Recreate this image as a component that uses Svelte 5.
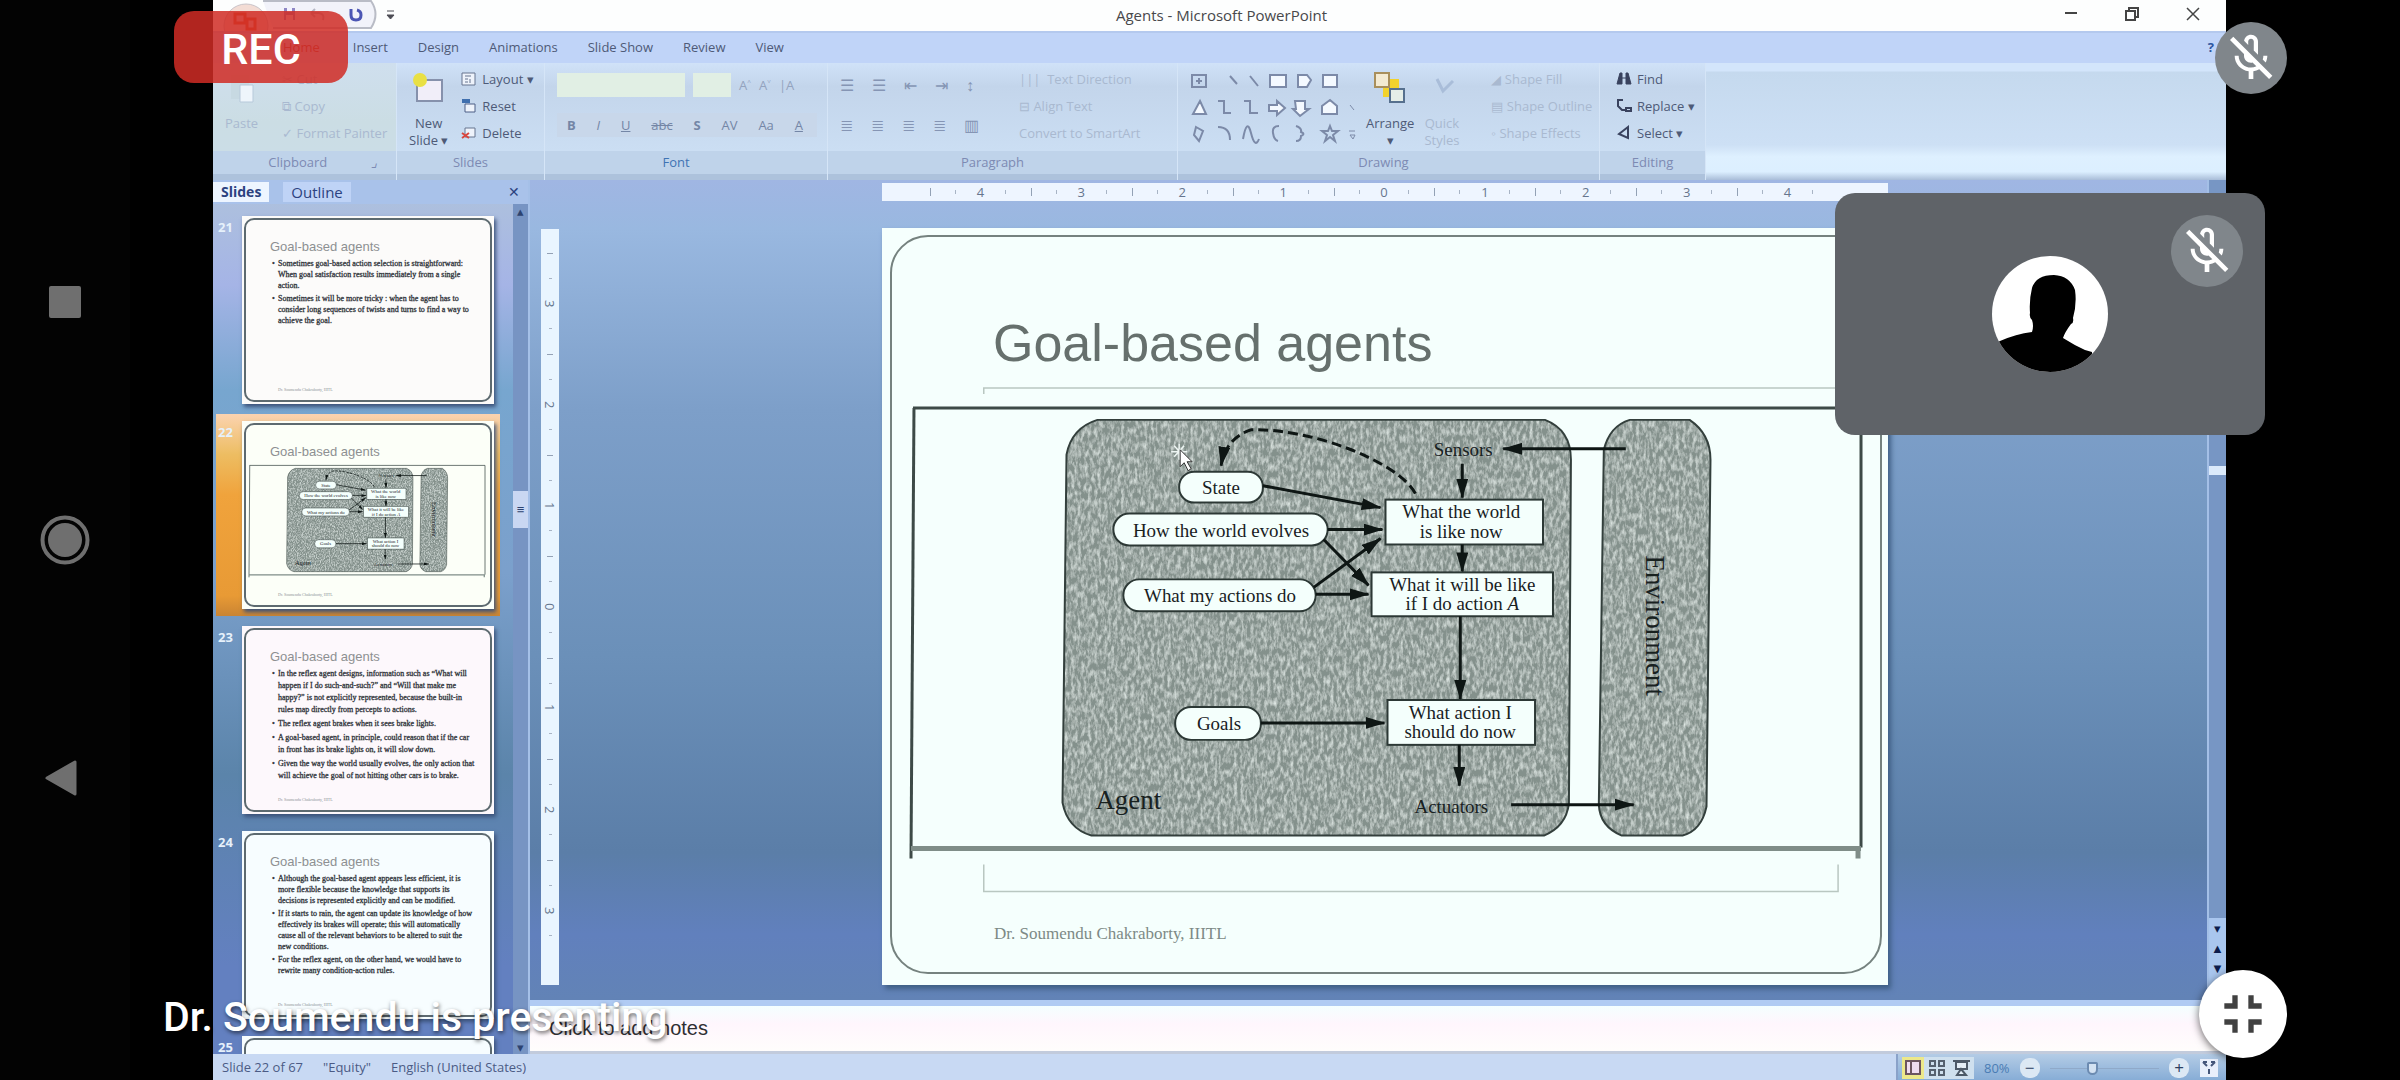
<script>
  const tabs = ['Insert', 'Design', 'Animations', 'Slide Show', 'Review', 'View'];
  const hTicks = ['4', '3', '2', '1', '0', '1', '2', '3', '4'];
  const vTicks = ['3', '2', '1', '0', '1', '2', '3'];
  const slides = [
    {
      n: 21,
      tone: 'warm',
      points: [
        ['Sometimes goal-based action selection is straightforward:', 'When goal satisfaction results immediately from a single', 'action.'],
        ['Sometimes it will be more tricky : when the agent has to', 'consider long sequences of twists and turns to find a way to', 'achieve the goal.']
      ]
    },
    { n: 22, tone: 'ivory', diagram: true, points: [] },
    {
      n: 23,
      tone: 'rose',
      points: [
        ['In the reflex agent designs, information such as “What will', 'happen if I do such-and-such?” and “Will that make me', 'happy?” is not explicitly represented, because the built-in', 'rules map directly from percepts to actions.'],
        ['The reflex agent brakes when it sees brake lights.'],
        ['A goal-based agent, in principle, could reason that if the car', 'in front has its brake lights on, it will slow down.'],
        ['Given the way the world usually evolves, the only action that', 'will achieve the goal of not hitting other cars is to brake.']
      ]
    },
    {
      n: 24,
      tone: 'cool',
      points: [
        ['Although the goal-based agent appears less efficient, it is', 'more flexible because the knowledge that supports its', 'decisions is represented explicitly and can be modified.'],
        ['If it starts to rain, the agent can update its knowledge of how', 'effectively its brakes will operate; this will automatically', 'cause all of the relevant behaviors to be altered to suit the', 'new conditions.'],
        ['For the reflex agent, on the other hand, we would have to', 'rewrite many condition-action rules.']
      ]
    },
    { n: 25, tone: 'cool', points: [] }
  ];
</script>

{#snippet micOff()}
  <svg class="mic" viewBox="0 0 24 24" aria-hidden="true">
    <path fill="#fff" d="M10.8 4.9c0-.66.54-1.2 1.2-1.2s1.2.54 1.2 1.2l-.01 3.91L15 10.6V5c0-1.66-1.34-3-3-3-1.54 0-2.79 1.16-2.96 2.65l1.76 1.76V4.9zM19 11h-1.7c0 .58-.1 1.13-.27 1.64l1.27 1.27c.44-.88.7-1.87.7-2.91zM4.41 2.86L3 4.27l6 6V11c0 1.66 1.34 3 3 3 .23 0 .44-.03.65-.08l1.66 1.66c-.71.33-1.5.52-2.31.52-2.76 0-5.3-2.1-5.3-5.1H5c0 3.41 2.72 6.23 6 6.72V21h2v-3.28c.91-.13 1.77-.45 2.55-.9l4.2 4.2 1.41-1.41L4.41 2.86z" />
  </svg>
{/snippet}

<div class="phone">
  <nav class="keys" aria-label="System">
    <button aria-label="Recent apps"><svg width="50" height="50" viewBox="0 0 50 50"><rect x="9" y="9" width="32" height="32" rx="2" fill="#6f6f6f" /></svg></button>
    <button aria-label="Home"><svg width="50" height="50" viewBox="0 0 50 50"><circle cx="25" cy="25" r="22.500" fill="none" stroke="#6f6f6f" stroke-width="4" /><circle cx="25" cy="25" r="17" fill="#6f6f6f" /></svg></button>
    <button aria-label="Back"><svg width="50" height="50" viewBox="0 0 50 50"><path d="M7 25 L35 9 V41 Z" fill="#6f6f6f" stroke="#6f6f6f" stroke-width="3" stroke-linejoin="round" /></svg></button>
  </nav>

  <main class="app">
    <header class="titlebar">
      <div class="quick">
        <svg width="200" height="31" viewBox="0 0 200 31" aria-hidden="true">
          <path d="M50 1 H158 Q167 14 158 28 H60" fill="#f2f3fa" stroke="#b9bcc6" stroke-width="2" />
          <circle cx="33" cy="26" r="22" fill="#f3dcd4" stroke="#c9c3c8" />
          <path d="M22 14h10v9H22zM34 19h8v10h-8z" fill="none" stroke="#e0562d" stroke-width="3" />
          <path d="M71 8h11v12H71z" fill="#8e87c4" /><path d="M74 8h5v4h-5zM73 15h7v5h-7z" fill="#f4f4ff" />
          <path d="M98 13h8q6 1 4 7M98 13l4-4M98 13l4 4" fill="none" stroke="#b4b6c4" stroke-width="2" />
          <path d="M138 9v6q0 5 5 5t5-5q0-4-4-5" fill="none" stroke="#4c56b4" stroke-width="3" />
          <path d="M174 11h7M174 15h7l-3.500 4z" stroke="#4d4d55" fill="#4d4d55" />
        </svg>
      </div>
      <h1>Agents - Microsoft PowerPoint</h1>
      <div class="winbtns">
        <button aria-label="Minimize"><svg width="16" height="16" viewBox="0 0 16 16"><path d="M2 7h12" stroke="#444" stroke-width="2" /></svg></button>
        <button aria-label="Restore"><svg width="16" height="16" viewBox="0 0 16 16" fill="none" stroke="#444" stroke-width="2"><path d="M2 5h9v9H2zM5 5V2h9v9h-3" /></svg></button>
        <button aria-label="Close"><svg width="16" height="16" viewBox="0 0 16 16"><path d="M2 2l12 12M14 2L2 14" stroke="#444" stroke-width="1.500" /></svg></button>
      </div>
    </header>

    <nav class="tabs" aria-label="Ribbon tabs">
      <button class="home">Home</button>
      {#each tabs as t}<button>{t}</button>{/each}
      <span class="help">?</span>
    </nav>

    <section class="ribbon">
      <div class="group clip">
        <div class="tools faint">
          <div class="big">
            <svg width="32" height="34" viewBox="0 0 32 34"><path d="M5 4h18v24H5z" fill="#c7d9e2" /><path d="M14 14h13v17H14z" fill="#eef5fb" stroke="#b7c9da" /></svg>
            <span>Paste</span>
          </div>
          <div class="stack"><button>✂ Cut</button><button>⧉ Copy</button><button>✓ Format Painter</button></div>
        </div>
        <footer>Clipboard <i>⌟</i></footer>
      </div>
      <div class="group slds">
        <div class="tools">
          <div class="big">
            <svg width="32" height="34" viewBox="0 0 32 34"><path d="M4 9h25v21H4z" fill="#f1eef9" stroke="#8691ac" stroke-width="2" /><circle cx="7" cy="9" r="7" fill="#e9e044" /></svg>
            <span>New<br />Slide ▾</span>
          </div>
          <div class="stack">
            <button><svg width="16" height="16" viewBox="0 0 16 16"><path d="M1 2h13v12H1z" fill="#eef3fb" stroke="#67748f" /><path d="M4 5h6M4 8h3M9 8v4M4 11h3" stroke="#67748f" /></svg>Layout ▾</button>
            <button><svg width="16" height="16" viewBox="0 0 16 16"><path d="M4 6h10v8H4z" fill="#eef3fb" stroke="#4d5f86" /><path d="M1 1h8v4H1z" fill="#3f6fae" /></svg>Reset</button>
            <button><svg width="16" height="16" viewBox="0 0 16 16"><path d="M4 3h10v9H4z" fill="#eef3fb" stroke="#67748f" /><path d="M1 8l7 5M8 8l-7 5" stroke="#d8463f" stroke-width="2" /></svg>Delete</button>
          </div>
        </div>
        <footer>Slides</footer>
      </div>
      <div class="group font">
        <div class="tools rows">
          <div class="line"><input class="face" aria-label="Font" /><input class="size" aria-label="Font size" /><span class="dim">A˄</span><span class="dim">A˅</span><span class="dim">|A</span></div>
          <div class="line spread"><b>B</b><i>I</i><u>U</u><s>abc</s><b>S</b><span>AV</span><span>Aa</span><u>A</u></div>
        </div>
        <footer class="blue">Font</footer>
      </div>
      <div class="group para">
        <div class="tools">
          <div class="rows">
            <div class="line wide"><span>☰</span><span>☰</span><span>⇤</span><span>⇥</span><span>↕</span></div>
            <div class="line wide"><span>≣</span><span>≣</span><span>≣</span><span>≣</span><span>▥</span></div>
          </div>
          <div class="stack faint"><button>|||  Text Direction</button><button>⊟ Align Text</button><button>Convert to SmartArt</button></div>
        </div>
        <footer>Paragraph</footer>
      </div>
      <div class="group draw">
        <div class="tools">
          <svg class="shapes" width="166" height="80" viewBox="0 0 166 80" fill="none" stroke="#7c8aa8" stroke-width="2" aria-hidden="true">
            <path d="M2 8h14v12H2zM6 14h6M9 11v6M40 9l7 8M60 9l8 10" />
            <g fill="#f4f9ff"><path d="M80 8h16v12H80zM108 8h9l4 5-4 7h-9zM133 8h14v12h-14z" />
            <path d="M10 34l6 13H3zM79 38h8v-4l8 7-8 7v-4h-8zM105 34h10v8h4l-9 7-7-7h3zM132 47v-8l8-6 7 6v8z" /></g>
            <path d="M28 34h6v12h7M54 34h6v12h8M6 60l7 4-4 10-5-6zM28 60q12 0 12 13M53 72q4-22 8-6t8 6M89 59q-7 0-6 7t5 8M106 59q6 2 5 6 5 2 0 4 0 5-5 5" />
            <path d="M140 59l2 5h6l-5 4 2 6-5-4-5 4 2-6-5-4h6z" />
            <path d="M160 38l4 5M159 64h6M160 68h5l-2 4z" stroke-width="1" />
          </svg>
          <div class="big">
            <svg width="34" height="34" viewBox="0 0 34 34"><path d="M10 8h16v18H10z" fill="#f2d22c" /><path d="M2 2h14v14H2z" fill="#f4ead2" stroke="#a98f5c" stroke-width="2" /><path d="M17 18h14v13H17z" fill="#e5eee8" stroke="#56708e" stroke-width="2" /></svg>
            <span>Arrange<br />▾</span>
          </div>
          <div class="big faint">
            <svg width="34" height="34" viewBox="0 0 34 34"><path d="M12 8l6 12 10-10" fill="none" stroke="#a9bdd9" stroke-width="3" /></svg>
            <span>Quick<br />Styles</span>
          </div>
          <div class="stack faint"><button>◢ Shape Fill</button><button>▤ Shape Outline</button><button>◦ Shape Effects</button></div>
        </div>
        <footer>Drawing</footer>
      </div>
      <div class="group edit">
        <div class="tools">
          <div class="stack">
            <button><svg width="16" height="16" viewBox="0 0 16 16"><path d="M4 2l-3 11h5V2zM10 2v11h5L12 2zM6 7h4" fill="#39425e" stroke="#39425e" /></svg>Find</button>
            <button><svg width="16" height="16" viewBox="0 0 16 16"><path d="M7 2H2v6l4 4h3M10 10h5v3h-5z" fill="none" stroke="#39425e" stroke-width="2" /></svg>Replace ▾</button>
            <button><svg width="16" height="16" viewBox="0 0 16 16"><path d="M12 2L3 9l9 4z" fill="none" stroke="#39425e" stroke-width="2" /></svg>Select ▾</button>
          </div>
        </div>
        <footer>Editing</footer>
      </div>
    </section>

    <div class="work">
      <aside class="panel">
        <div class="ptabs">
          <button class="on">Slides</button><button>Outline</button><button class="x" aria-label="Close pane">✕</button>
        </div>
        <div class="pbody">
          <ol class="thumbs">
            {#each slides as s}
              <li class:sel={s.n === 22}>
                <span class="num">{s.n}</span>
                <div class="thumb {s.tone}">
                  <div class="edge">
                    <h3>Goal-based agents</h3>
                    {#if s.diagram}
                      <svg class="mini" viewBox="905 400 961 465" aria-hidden="true"><use href="#agent-diagram" /></svg>
                    {:else}
                      <ul class:loose={s.n === 23}>
                        {#each s.points as p}<li>{#each p as l}<div>{l}</div>{/each}</li>{/each}
                      </ul>
                    {/if}
                    <small>Dr. Soumendu Chakraborty, IIITL</small>
                  </div>
                </div>
              </li>
            {/each}
          </ol>
          <div class="pscroll"><span class="cap">▴</span><span class="grip">≡</span><span class="cap">▾</span></div>
        </div>
      </aside>

      <section class="editor">
        <div class="stage">
          <div class="vruler">{#each vTicks as t}<span>{t}</span>{/each}</div>
          <div class="canvas">
            <div class="hruler">{#each hTicks as t}<span>{t}</span>{/each}</div>
            <article class="slide">
              <div class="frame">
                <h2>Goal-based agents</h2>
                <svg class="figure" viewBox="905 380 961 520" role="img" aria-label="Goal-based agent diagram">
                  <defs>
                    <filter id="grain" x="0" y="0" width="1" height="1">
                      <feTurbulence type="fractalNoise" baseFrequency="0.3 0.14" numOctaves="3" seed="4" />
                      <feColorMatrix values="0 0 0 0 0.8  0 0 0 0 0.87  0 0 0 0 0.84  1.6 0 0 0 -0.62" />
                      <feComposite in2="SourceAlpha" operator="in" result="n" />
                      <feMerge><feMergeNode in="SourceGraphic" /><feMergeNode in="n" /></feMerge>
                    </filter>
                    <marker id="tip" viewBox="0 0 20 12" refX="19" refY="6" markerWidth="20" markerHeight="12" markerUnits="userSpaceOnUse" orient="auto"><path d="M0 0L20 6L0 12z" fill="#0e1614" /></marker>
                    <path id="agent-box" d="M1096 420H1545Q1571 430 1571 460L1569 805Q1566 828 1544 837H1090Q1066 830 1061 804L1065 455Q1070 428 1096 420Z" />
                    <path id="env-box" d="M1630 420H1690Q1711 434 1711 460L1707 808Q1702 832 1683 837H1622Q1600 828 1599 806L1604 450Q1610 426 1630 420Z" />
                  </defs>
                  <path d="M982 394V388H1839M982 866V893H1839V866" fill="none" stroke="#b9c7c1" stroke-width="1.500" />
                  <g id="agent-diagram">
                    <path d="M911 408H1862V849" fill="none" stroke="#3d4a47" stroke-width="3" />
                    <path d="M912 408L909 860" fill="none" stroke="#3d4a47" stroke-width="3" />
                    <path d="M909 850H1862M1859 848V860" fill="none" stroke="#7f8d88" stroke-width="5" />
                    <g fill="#84918c" filter="url(#grain)"><use href="#agent-box" /><use href="#env-box" /></g>
                    <g fill="none" stroke="#333f3c" stroke-width="2"><use href="#agent-box" /><use href="#env-box" /></g>
                    <g fill="#f4fffc" stroke="#2c3835" stroke-width="2">
                      <rect x="1178" y="472" width="84" height="31" rx="15" />
                      <rect x="1112" y="514" width="215" height="32" rx="16" />
                      <rect x="1122" y="580" width="193" height="32" rx="16" />
                      <rect x="1174" y="708" width="86" height="33" rx="16" />
                      <rect x="1385" y="500" width="158" height="45" />
                      <rect x="1371" y="573" width="182" height="44" />
                      <rect x="1387" y="701" width="148" height="45" />
                    </g>
                    <g class="arrows">
                      <path d="M1262 486L1380 508" /><path d="M1327 530H1382" /><path d="M1323 540L1368 586" />
                      <path d="M1313 588L1380 539" /><path d="M1315 595H1368" /><path d="M1260 724H1384" />
                      <path d="M1462 464V498" /><path d="M1462 545V572" /><path d="M1460 617V700" /><path d="M1459 746V787" />
                      <path d="M1626 449H1503" /><path d="M1511 806H1634" />
                      <path d="M1415 494C1398 462 1310 428 1250 430Q1225 438 1220 466" stroke-dasharray="10 5" />
                    </g>
                    <g class="lbl" text-anchor="middle">
                      <text x="1220" y="494">State</text>
                      <text x="1220" y="537">How the world evolves</text>
                      <text x="1219" y="603">What my actions do</text>
                      <text x="1218" y="731">Goals</text>
                      <text x="1461" y="518">What the world</text><text x="1461" y="538">is like now</text>
                      <text x="1462" y="592">What it will be like</text><text x="1462" y="611">if I do action <tspan font-style="italic">A</tspan></text>
                      <text x="1460" y="720">What action I</text><text x="1460" y="739">should do now</text>
                      <text x="1463" y="456">Sensors</text><text x="1451" y="814">Actuators</text>
                    </g>
                    <text class="cap-l" x="1094" y="810">Agent</text>
                    <text class="cap-l" transform="translate(1646 556) rotate(90)">Environment</text>
                  </g>
                  <path d="M1178 444V460M1170 452H1186M1173 446l10 11M1183 446l-10 11" stroke="#eef6f3" stroke-width="1.500" />
                  <path d="M1179 450v17l4-4 4 8 3-2-4-7h5z" fill="#fff" stroke="#333" />
                </svg>
                <p>Dr. Soumendu Chakraborty, IIITL</p>
              </div>
            </article>
          </div>
          <div class="vscroll"><span class="grip"></span><span class="foot"><span>▾</span><span>▲</span><span>▼</span></span></div>
        </div>
        <div class="notes">Click to add notes</div>
      </section>
    </div>

    <footer class="status">
      <span>Slide 22 of 67</span><span>"Equity"</span><span>English (United States)</span>
      <div class="views">
        <svg width="72" height="22" viewBox="0 0 72 22" aria-hidden="true">
          <path d="M0 0h22v22H0z" fill="#ece88a" /><path d="M4 4h14v13H4zM9 4v13" fill="#efdcf0" stroke="#6c5560" stroke-width="2" />
          <path d="M22 0h50v22H22z" fill="#cfe0ee" />
          <path d="M28 4h5v5h-5zM37 4h5v5h-5zM28 13h5v5h-5zM37 13h5v5h-5z" fill="none" stroke="#56616f" stroke-width="2" />
          <path d="M51 4h17M54 5h11v7H54zM59 12l-4 6h9z" fill="#e4eef6" stroke="#4d5a68" stroke-width="2" />
        </svg>
        <span class="pct">80%</span>
        <button aria-label="Zoom out">−</button>
        <input type="range" aria-label="Zoom" min="0" max="100" value="38" />
        <button aria-label="Zoom in">+</button>
        <svg width="20" height="20" viewBox="0 0 20 20"><path d="M1 1h18v18H1z" fill="#e9effb" /><path d="M4 4l4 4M16 4l-4 4M10 11v5M4 4h4M16 4h-4" stroke="#45567a" stroke-width="2" /></svg>
      </div>
    </footer>
  </main>

  <div class="rec">REC</div>
  <button class="round mute" aria-label="Microphone off">{@render micOff()}</button>
  <section class="tile">
    <svg class="avatar" viewBox="0 0 116 116" aria-label="Participant">
      <clipPath id="round"><circle cx="58" cy="58" r="58" /></clipPath>
      <circle cx="58" cy="58" r="58" fill="#fff" />
      <path clip-path="url(#round)" d="M0 89L8 85Q24 78 40 76Q42 70 40 64Q37 61 38 57Q37 44 40 32Q44 19 62 19Q78 20 83 34Q85 48 81 62Q82 67 79 68Q73 76 71 82Q82 89 93 94L100 96V116H0Z" />
    </svg>
    <button class="round self" aria-label="Microphone off">{@render micOff()}</button>
  </section>
  <div class="presenting">Dr. Soumendu is presenting</div>
  <button class="exit" aria-label="Exit full screen"><svg width="64" height="64" viewBox="0 0 24 24"><path fill="#414141" d="M5 16h3v3h2v-5H5v2zm3-8H5v2h5V5H8v3zm6 11h2v-3h3v-2h-5v5zm2-11V5h-2v5h5V8h-3z" /></svg></button>
</div>

<style>
  :global(body) { margin: 0; background: #000; overflow: hidden; }
  * { box-sizing: border-box; }
  button { border: 0; background: none; padding: 0; font: inherit; color: inherit; white-space: nowrap; }
  h1, h2, h3, p, ol, ul { margin: 0; padding: 0; font-weight: 400; list-style: none; }
  .phone { position: relative; display: flex; height: 100vh; background: #000; font-family: "Open Sans", "Noto Sans", sans-serif; font-size: 13px; color: #4e5a77; }
  .keys { flex: 0 0 130px; margin-right: 83px; background: #030303; display: flex; flex-direction: column; align-items: center; justify-content: center; gap: 188px; }
  .keys button { height: 50px; }
  .app { flex: 1; min-width: 0; margin-right: 174px; display: flex; flex-direction: column; background: #c9dcf3; overflow: hidden; }

  .titlebar { flex: 0 0 31px; display: grid; grid-template-columns: 1fr auto 1fr; align-items: center; background: #fdfefe; }
  .titlebar h1 { font-size: 15px; line-height: 28px; padding: 0 0 2px 4px; color: #48484b; }
  .quick { height: 31px; }
  .winbtns { display: flex; justify-content: flex-end; gap: 45px; padding: 0 25px 4px 0; }
  .winbtns svg { display: block; }
  .tabs { flex: 0 0 32px; display: flex; align-items: center; gap: 30px; padding: 0 12px 2px 70px; background: #c0d4f8; border-top: 2px solid #b4c9ee; }
  .tabs .home { color: #a8423f; margin-right: 3px; }
  .help { margin-left: auto; color: #2d56a0; font-weight: 700; }

  .ribbon { flex: 0 0 117px; height: 117px; display: flex; background: linear-gradient(#d3e5fb 0 8px, #c5d9ee 9px, #cde0f5 70%, #def0ff 80%, #dcefff 93%, #a9bdd8); }
  .group { display: flex; flex-direction: column; background: linear-gradient(#d0e2f8, #c3d5eb 20%, #cbdef3 75%); border-right: 1px solid #d5e5f7; overflow: hidden; }
  .group footer { flex: 0 0 29px; text-align: center; line-height: 22px; background: #bfd3ea; color: #7d8ab3; border-bottom: 6px solid #adc2dc; white-space: nowrap; }
  .group footer.blue { color: #3f73b4; }
  .clip { flex: 0 0 184px; background: linear-gradient(#cfdfee, #cbdde4 50%, #cbdde8); }
  .clip footer i { margin-left: 40px; }
  .clip footer { padding-left: 36px; }
  .slds { flex: 0 0 148px; }
  .font { flex: 0 0 283px; }
  .para { flex: 0 0 350px; }
  .font footer, .para footer { padding-right: 20px; }
  .draw { flex: 0 0 422px; }
  .draw footer { padding-right: 10px; }
  .edit { flex: 0 0 106px; }
  .tools { flex: 1; display: flex; gap: 12px; padding: 4px 10px 0 12px; min-height: 0; }
  .big { display: flex; flex: none; flex-direction: column; align-items: center; text-align: center; line-height: 17px; padding-top: 4px; white-space: nowrap; }
  .big svg { margin-bottom: 10px; flex: none; }
  .big span { height: 34px; }
  .stack { display: flex; flex-direction: column; gap: 7px; padding-top: 2px; }
  .stack button { display: flex; align-items: center; gap: 5px; height: 20px; line-height: 20px; white-space: pre; }
  .faint { color: #a9b9d0; }
  .clip .tools { gap: 24px; padding-right: 0; }
  .slds .tools { gap: 13px; padding-right: 0; }
  .rows { display: flex; flex-direction: column; gap: 16px; padding-top: 10px; }
  .line { display: flex; align-items: center; gap: 8px; height: 24px; }
  .spread { justify-content: space-between; color: #7486a6; padding: 0 14px 0 10px; background: #c8d7ea; }
  .line input { border: 0; height: 24px; background: #e1efe4; min-width: 0; padding: 0; }
  .face { width: 128px; }
  .size { width: 38px; }
  .font .tools { gap: 16px; }
  .dim { color: #93a3be; }
  .para .tools { gap: 40px; }
  .para .rows { padding-top: 6px; }
  .wide { gap: 18px; color: #8595b4; font-size: 16px; }
  .shapes { flex: none; }
  .draw .tools { gap: 10px; padding-right: 0; }
  .draw .stack { margin-left: 22px; }
  .edit .tools { padding: 4px 0 0 16px; }

  .work { flex: 1; min-height: 0; display: flex; }
  .panel { flex: 0 0 312px; display: flex; flex-direction: column; background: linear-gradient(#afc3dc, #a5b4e6 12%, #77a6cf 24%, #7ba0cc 45%, #5b84aa 68%, #6380c0 90%); border-right: 2px solid #a5c0e8; }
  .ptabs { flex: 0 0 24px; display: flex; align-items: center; gap: 14px; background: #a9c2ea; font-size: 15px; color: #2c4280; }
  .ptabs button { height: 20px; line-height: 18px; padding: 0 8px; background: #bfd3f6; }
  .ptabs .on { background: #edf5ff; font-weight: 700; font-size: 14px; }
  .ptabs .x { margin-left: auto; background: none; font-size: 14px; }
  .pbody { flex: 1; min-height: 0; display: flex; }
  .thumbs { flex: 1; overflow: hidden; padding: 5px 13px 0 3px; }
  .thumbs > li { display: flex; height: 202px; margin-bottom: 3px; padding: 7px 6px 7px 2px; }
  .thumbs > li.sel { background: linear-gradient(#fbd3b0, #edbd62 20%, #f0a33c 40%, #e89a35 90%, #c98433); }
  .num { flex: 0 0 24px; font-size: 13px; font-weight: 700; color: #e6f1fb; line-height: 22px; }
  .thumb { flex: 1; min-width: 0; padding: 2px; box-shadow: 2px 3px 4px #3c527a; }
  .warm { background: #fcfbfa; }
  .ivory { background: #fcfff8; }
  .rose { background: #fdf8fc; }
  .cool { background: #f7fdff; }
  .edge { height: 100%; border: 2px solid #5d6a70; border-radius: 10px; padding: 18px 4px 0 24px; display: flex; flex-direction: column; overflow: hidden; }
  .edge h3 { font: 13px/18px "Liberation Sans", sans-serif; color: #8d9092; }
  .edge ul { flex: 1; padding-top: 2px; font: 8px/11px "Liberation Serif", serif; color: #30343a; padding-left: 8px; }
  .edge ul.loose { line-height: 12px; }
  .edge ul li { position: relative; margin-bottom: 2px; white-space: nowrap; -webkit-text-stroke: 0.300px; }
  .edge ul li::before { content: "•"; position: absolute; left: -6px; }
  .edge small { margin-bottom: 6px; padding-left: 8px; font: 4px/8px "Liberation Serif", serif; color: #8a9296; }
  .mini { flex: none; height: 116px; width: 238px; margin: 2px 0 auto -22px; }
  .pscroll { flex: 0 0 15px; margin-bottom: 0; background: #7794c3; display: flex; flex-direction: column; align-items: center; line-height: 14px; color: #2d4370; }
  .pscroll .grip { width: 15px; height: 37px; line-height: 36px; text-align: center; background: #c9d7f2; margin-top: 273px; margin-bottom: auto; }

  .editor { flex: 1; min-width: 0; display: flex; flex-direction: column; }
  .stage { flex: 1; min-height: 0; display: flex; background: linear-gradient(#a0b6e3, #99b8e0 6%, #7d9fc9 28%, #6b90b9 58%, #5b7ea8 82%, #6180bd 92%, #6283b6); }
  .vruler { flex: none; width: 18px; margin: 49px 0 15px 11px; padding: 24px 0; background: #e9f5ff; display: flex; flex-direction: column; }
  .vruler span { flex: 1; writing-mode: vertical-rl; text-align: center; line-height: 18px; color: #66758e; font-size: 13px; background: linear-gradient(#93a1b5 0 0) center top / 6px 1px no-repeat, linear-gradient(#a8b4c5 0 0) center 25% / 3px 1px no-repeat, linear-gradient(#a8b4c5 0 0) center 75% / 3px 1px no-repeat; }
  .canvas { flex: 1; min-width: 0; padding: 3px 0 0 10px; display: flex; flex-direction: column; align-items: center; }
  .hruler { flex: 0 0 18px; width: 100%; max-width: 1006px; padding: 0 50px 0 48px; display: flex; background: #eef5ff; margin-bottom: 27px; }
  .hruler span { flex: 1; text-align: center; line-height: 18px; color: #66758e; background: linear-gradient(#93a1b5 0 0) left center / 1px 8px no-repeat, linear-gradient(#a8b4c5 0 0) 25% center / 1px 4px no-repeat, linear-gradient(#a8b4c5 0 0) 75% center / 1px 4px no-repeat; }
  .slide { width: 100%; max-width: 1006px; background: #f5fffd; padding: 7px 6px 11px 8px; box-shadow: 3px 4px 5px #3f5f85; }
  .frame { border: 2px solid #75827f; border-radius: 38px; padding: 76px 15px 28px; }
  .frame h2 { font: 52px/60px "Liberation Sans", sans-serif; color: #66706d; padding-left: 86px; }
  .figure { display: block; width: 100%; margin-top: 7px; }
  .arrows path { fill: none; stroke: #0e1614; stroke-width: 3px; marker-end: url(#tip); }
  .lbl { font: 19px "Liberation Serif", serif; fill: #18211f; }
  .cap-l { font: 27px "Liberation Serif", serif; fill: #18211f; }
  .frame p { font: 17px/20px "Liberation Serif", serif; color: #7d8a86; padding: 26px 0 0 87px; }
  .vscroll { flex: 0 0 19px; margin-left: 6px; background: #7796c4; border-left: 2px solid #a4bfe6; display: flex; flex-direction: column; }
  .vscroll .grip { height: 9px; margin: 286px 0 auto; background: #dbeafb; }
  .foot { display: flex; flex-direction: column; align-items: center; background: #a9c6ee; color: #0c1c4c; line-height: 20px; padding-bottom: 22px; }
  .notes { flex: 0 0 54px; border-top: 6px solid #b0cbf3; border-bottom: 3px solid #c2cbdc; background: linear-gradient(#f4ffff, #fff6fd 40%, #fffdfc); padding-left: 19px; font: 20px/44px "Liberation Sans", sans-serif; color: #2f2f33; }

  .status { flex: 0 0 26px; display: flex; align-items: center; gap: 20px; padding-left: 9px; background: #c8d9f3; color: #4b5b85; white-space: nowrap; }
  .views { margin-left: auto; align-self: stretch; display: flex; align-items: center; gap: 10px; padding: 2px 7px 0 4px; width: 330px; background: linear-gradient(#b4cce6, #87add6); border-left: 2px solid #8aa2c9; }
  .views > svg { flex: none; }
  .views button { flex: 0 0 20px; height: 20px; border-radius: 9px; background: #dce8f4; line-height: 18px; font-size: 17px; color: #2c3f62; }
  .pct { color: #4a7cb4; }
  .views input { flex: 1; min-width: 0; margin: 0; appearance: none; height: 1px; background: #8fa9c9; }
  .views input::-webkit-slider-thumb { appearance: none; width: 11px; height: 13px; background: #d3e2f2; border: 2px solid #6c8bb1; border-radius: 2px 2px 6px 6px; }

  .rec { position: absolute; left: 174px; top: 11px; width: 174px; height: 72px; border-radius: 20px; background: rgba(208, 43, 37, 0.85); color: #fff; text-align: center; font: 500 43px/76px Roboto, sans-serif; }
  .round { width: 72px; height: 72px; border-radius: 50%; background: #80868b; display: grid; place-items: center; }
  .mic { width: 56px; height: 56px; }
  .mute { position: absolute; right: 113px; top: 22px; }
  .tile { position: absolute; right: 135px; top: 193px; width: 430px; height: 242px; border-radius: 20px; background: #5f6368; display: grid; place-items: center; }
  .avatar { width: 116px; height: 116px; }
  .self { position: absolute; right: 22px; top: 22px; }
  .presenting { position: absolute; left: 163px; bottom: 39px; font: 500 41px/48px Roboto, sans-serif; color: #fff; text-shadow: 1px 2px 4px rgba(0, 0, 0, 0.6); }
  .exit { position: absolute; right: 113px; bottom: 22px; width: 88px; height: 88px; border-radius: 50%; background: #fff; display: grid; place-items: center; box-shadow: 0 2px 8px rgba(0, 0, 0, 0.6); }
</style>
